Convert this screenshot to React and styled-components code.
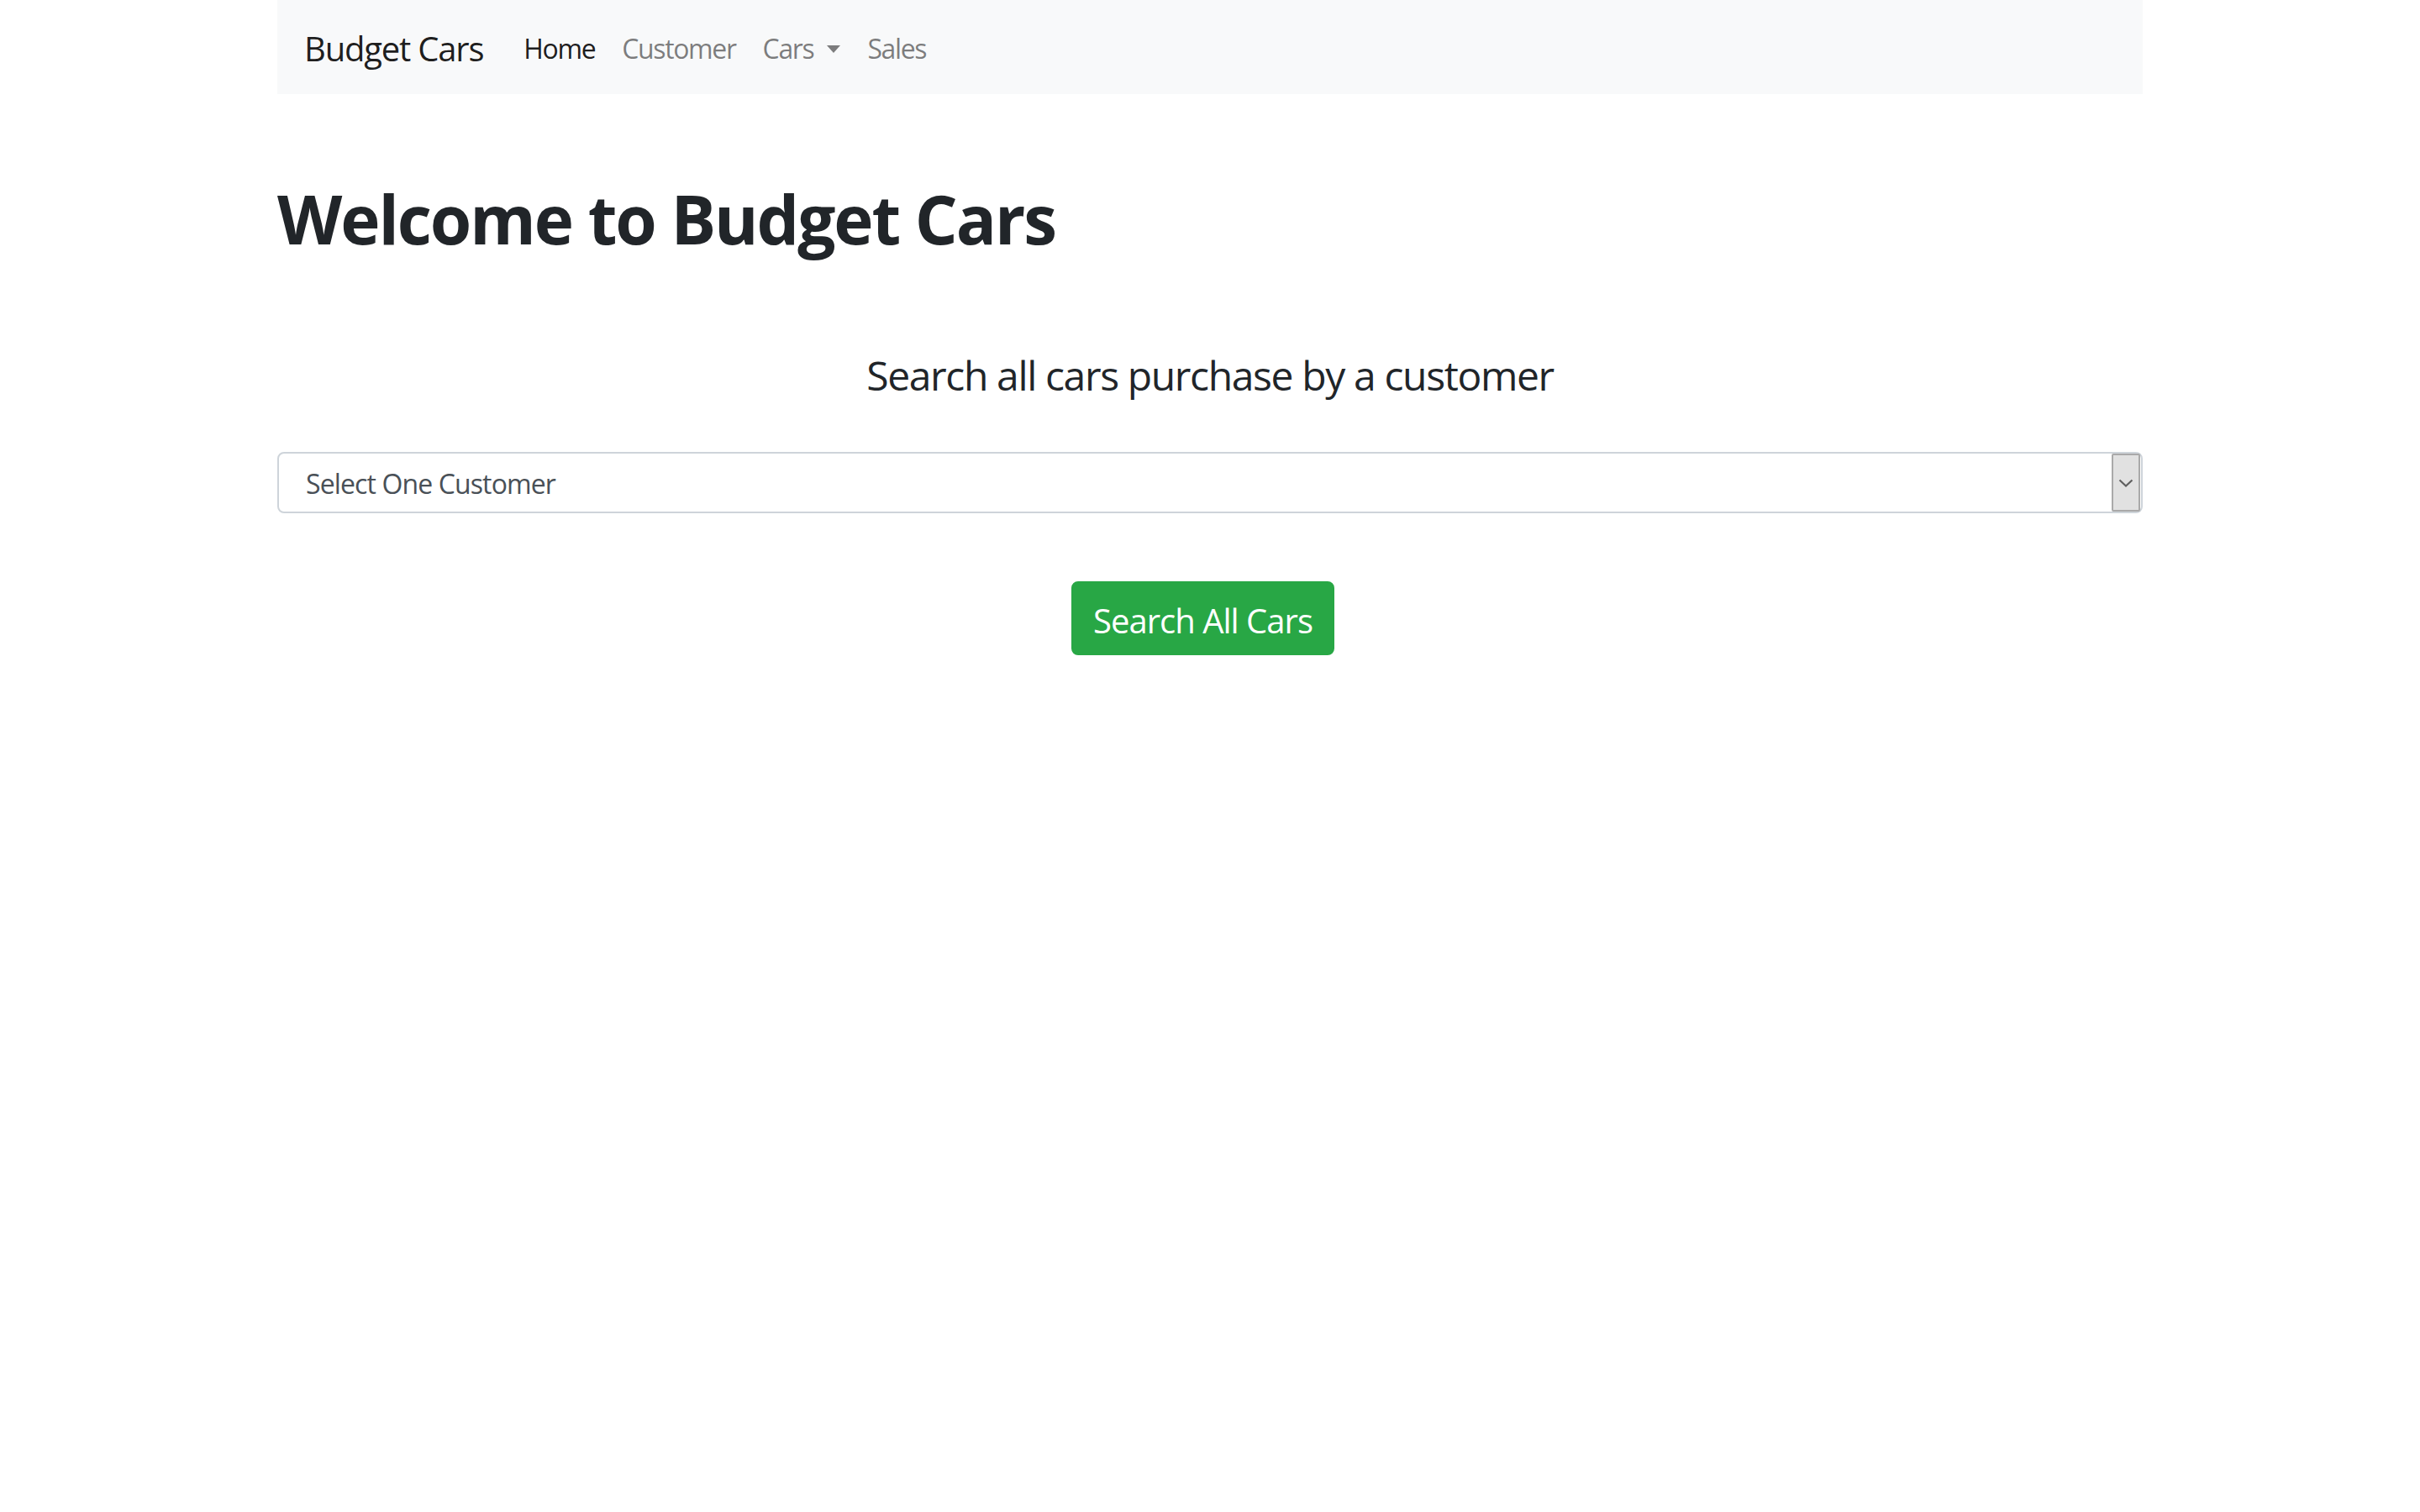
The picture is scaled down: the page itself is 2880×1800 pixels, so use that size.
import React from "react";
import styled, { createGlobalStyle } from "styled-components";

const GlobalStyle = createGlobalStyle`
  html, body {
    margin: 0;
    padding: 0;
    background: #ffffff;
  }
  body {
    font-family: "Open Sans", "Noto Sans", sans-serif;
    color: #212529;
  }
  * { box-sizing: border-box; }
`;

const Container = styled.div`
  width: 2220px;
  margin: 0 auto;
`;

const Navbar = styled.nav`
  display: flex;
  align-items: center;
  background: #f8f9fa;
  padding: 16px 32px;
  height: 112px;
`;

const Brand = styled.a`
  font-size: 40px;
  line-height: 60px;
  padding: 12px 0 8px;
  margin-right: 32px;
  color: rgba(0, 0, 0, 0.9);
  text-decoration: none;
  white-space: nowrap;
  letter-spacing: -0.03em;
`;

const NavList = styled.ul`
  display: flex;
  list-style: none;
  margin: 0;
  padding: 0;
`;

const NavLink = styled.a`
  display: flex;
  align-items: center;
  font-size: 32px;
  line-height: 48px;
  padding: 18px 16px 14px;
  color: ${(p) => (p.$active ? "rgba(0, 0, 0, 0.9)" : "rgba(0, 0, 0, 0.5)")};
  text-decoration: none;
  white-space: nowrap;
  letter-spacing: -0.043em;
`;

const Caret = styled.span`
  display: inline-block;
  margin-left: 16px;
  width: 0;
  height: 0;
  border-top: 9px solid rgba(0, 0, 0, 0.5);
  border-left: 8px solid transparent;
  border-right: 8px solid transparent;
`;

const Title = styled.h1`
  margin: 100px 0 0;
  font-size: 80px;
  line-height: 96px;
  font-weight: 700;
  letter-spacing: -0.026em;
  color: #212529;
`;

const Subtitle = styled.h4`
  margin: 110px 0 0;
  font-size: 48px;
  line-height: 58px;
  font-weight: 400;
  text-align: center;
  letter-spacing: -0.0285em;
  color: #212529;
`;

const SelectBox = styled.div`
  margin-top: 62px;
  display: flex;
  align-items: center;
  height: 73px;
  border: 2px solid #ced4da;
  border-radius: 8px;
  background: #fff;
  padding: 0 1px 0 32px;
`;

const SelectLabel = styled.span`
  flex: 1;
  font-size: 32px;
  line-height: 48px;
  padding-top: 3px;
  color: #495057;
  letter-spacing: -0.0275em;
`;

const ArrowBox = styled.span`
  display: flex;
  align-items: center;
  justify-content: center;
  width: 34px;
  height: 69px;
  background: #e1e1e1;
  border: 2px solid #a9a9a9;
  border-radius: 2px;
`;

const ButtonRow = styled.div`
  display: flex;
  justify-content: center;
  margin-top: 81px;
  padding-right: 17px;
`;

const Button = styled.button`
  font-family: inherit;
  letter-spacing: -0.0245em;
  font-size: 40px;
  line-height: 60px;
  padding: 15px 24px 9px;
  color: #fff;
  background: #28a745;
  border: 2px solid #28a745;
  border-radius: 8px;
  cursor: pointer;
`;

export default function App() {
  return (
    <>
      <GlobalStyle />
      <Container>
        <Navbar>
          <Brand href="#">Budget Cars</Brand>
          <NavList>
            <li><NavLink href="#" $active>Home</NavLink></li>
            <li><NavLink href="#">Customer</NavLink></li>
            <li><NavLink href="#">Cars<Caret /></NavLink></li>
            <li><NavLink href="#">Sales</NavLink></li>
          </NavList>
        </Navbar>
        <Title>Welcome to Budget Cars</Title>
        <Subtitle>Search all cars purchase by a customer</Subtitle>
        <SelectBox>
          <SelectLabel>Select One Customer</SelectLabel>
          <ArrowBox>
            <svg width="18" height="10" viewBox="0 0 18 10" fill="none">
              <path d="M1.5 1.5 L9 8.5 L16.5 1.5" stroke="#5f5f5f" strokeWidth="2.2" />
            </svg>
          </ArrowBox>
        </SelectBox>
        <ButtonRow>
          <Button>Search All Cars</Button>
        </ButtonRow>
      </Container>
    </>
  );
}
